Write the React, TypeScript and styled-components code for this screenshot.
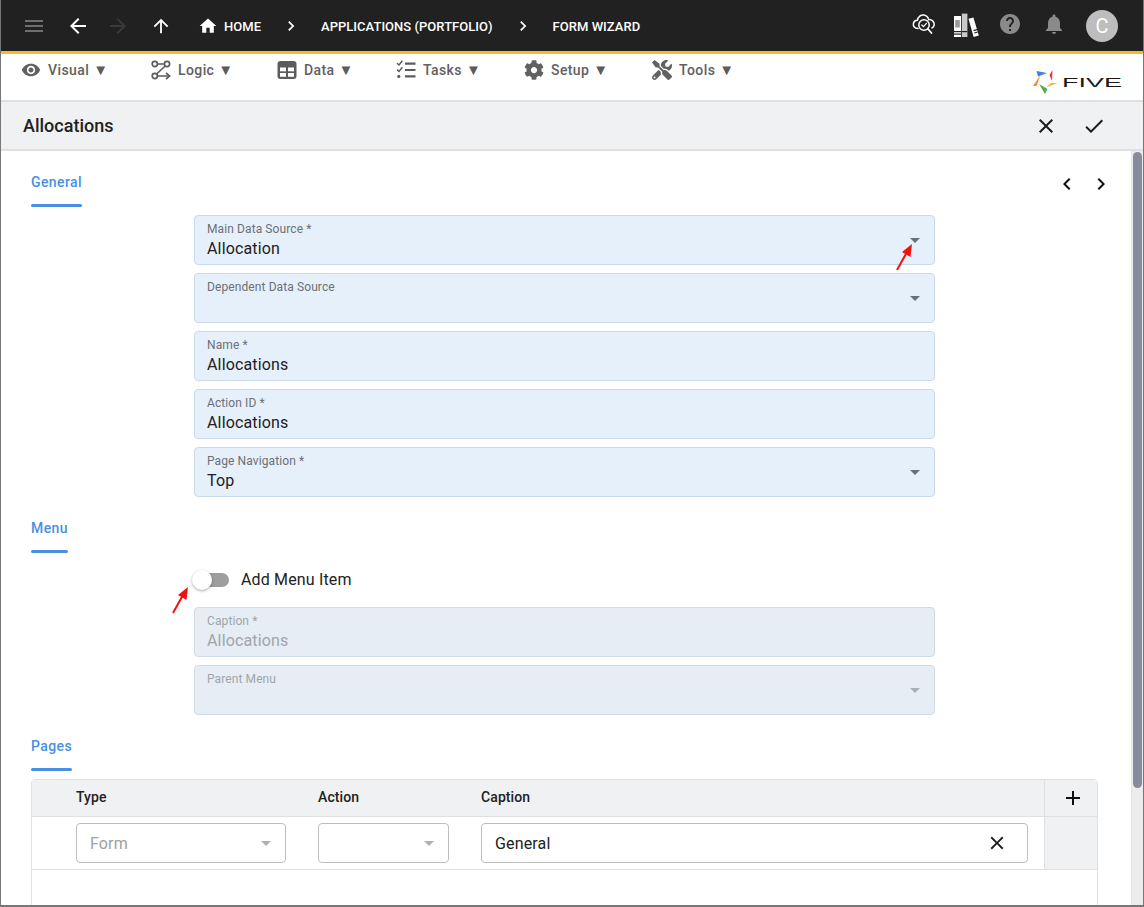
import React from "react";
import styled, { createGlobalStyle } from "styled-components";
import {
  MdMenu, MdArrowBack, MdArrowForward, MdArrowUpward, MdHome, MdChevronRight, MdChevronLeft,
  MdHelp, MdNotifications, MdClose, MdCheck, MdAdd, MdVisibility, MdArrowDropDown,
} from "react-icons/md";
import { FaCog, FaTools } from "react-icons/fa";

const Global = createGlobalStyle`
  html, body { margin: 0; padding: 0; background: #fff; }
  body { font-family: Roboto, "Liberation Sans", sans-serif; }
  * { box-sizing: border-box; }
`;

const Frame = styled.div`
  position: relative;
  width: 1144px;
  height: 907px;
  display: flex;
  flex-direction: column;
  overflow: hidden;
  border-left: 1px solid #777;
  border-right: 1px solid #777;
  border-bottom: 2px solid #777;
`;

const Header = styled.header`
  height: 54px;
  flex: none;
  background: #212121;
  border-bottom: 3px solid #f9b92d;
  display: flex;
  align-items: center;
  padding-left: 13px;
  color: #fff;
`;

const NavButton = styled.div<{ $color?: string; $ml?: number }>`
  width: 40px;
  height: 40px;
  flex: none;
  display: flex;
  align-items: center;
  justify-content: center;
  margin-left: ${(p) => p.$ml ?? 0}px;
  color: ${(p) => p.$color ?? "#fff"};
`;

const Crumb = styled.span<{ $ml?: number }>`
  display: flex;
  align-items: center;
  gap: 6px;
  margin-left: ${(p) => p.$ml ?? 0}px;
  padding-top: 1px;
  font-size: 13px;
  font-weight: 500;
  letter-spacing: 0.03px;
  white-space: nowrap;
  color: #fff;
`;

const CrumbArrow = styled.span<{ $ml: number }>`
  display: flex;
  margin-left: ${(p) => p.$ml}px;
  color: #fff;
`;

const HeaderRight = styled.div`
  margin-left: auto;
  display: flex;
  align-items: center;
  padding-right: 25px;
`;

const HeaderIcon = styled.div<{ $w: number; $color?: string; $up?: number }>`
  width: ${(p) => p.$w}px;
  display: flex;
  justify-content: center;
  margin-top: ${(p) => -(p.$up ?? 0)}px;
  color: ${(p) => p.$color ?? "#fff"};
`;

const Avatar = styled.div`
  width: 32px;
  height: 32px;
  border-radius: 50%;
  margin-left: 11px;
  background: #bdbdbd;
  color: #fff;
  font-size: 20px;
  display: flex;
  align-items: center;
  justify-content: center;
`;

const Toolbar = styled.nav`
  height: 48px;
  flex: none;
  background: #fff;
  border-bottom: 2px solid #e0e0e0;
  display: flex;
  align-items: flex-start;
  padding: 0 20px 0 20px;
`;

const ToolItem = styled.div<{ $w: number }>`
  width: ${(p) => p.$w}px;
  height: 32px;
  flex: none;
  display: flex;
  align-items: center;
  gap: 7px;
  color: #616161;
  font-size: 14px;
  font-weight: 500;
  letter-spacing: 0.4px;
  white-space: nowrap;
`;

const ToolLabel = styled.span`
  display: flex;
  align-items: center;
  gap: 4px;
`;

const ToolCaret = styled.span`
  font-size: 15px;
  line-height: 16px;
  letter-spacing: 0;
  color: #5c5c5c;
`;

const LogoWrap = styled.div`
  margin-left: auto;
  margin-top: 12px;
  display: flex;
`;

const TitleBar = styled.div`
  height: 49px;
  flex: none;
  background: #f0f1f3;
  border-bottom: 2px solid #e0e0e0;
  display: flex;
  align-items: center;
  padding: 0 37px 0 22px;
`;

const Title = styled.h1`
  margin: 0;
  flex: 1;
  font-size: 18px;
  font-weight: 500;
  color: #212121;
`;

const TitleAction = styled.div<{ $ml?: number }>`
  display: flex;
  margin-left: ${(p) => p.$ml ?? 0}px;
  color: #1c1c1c;
`;

const Body = styled.div`
  flex: 1;
  min-height: 0;
  display: flex;
`;

const Content = styled.main`
  position: relative;
  flex: 1;
  min-width: 0;
  padding-left: 30px;
  overflow: hidden;
`;

const SectionRow = styled.div`
  display: flex;
  justify-content: space-between;
`;

const SectionTab = styled.div`
  display: inline-block;
  padding-top: 23px;
  font-size: 14px;
  line-height: 16px;
  font-weight: 500;
  letter-spacing: 0.4px;
  color: #4a90e2;
  &::after {
    content: "";
    display: block;
    height: 3px;
    margin-top: 14px;
    border-radius: 2px;
    background: #4a90e2;
  }
`;

const StepArrows = styled.div`
  display: flex;
  gap: 10px;
  padding: 21px 18px 0 0;
  height: 44px;
  color: #111;
`;

const FormColumn = styled.div`
  width: 741px;
  margin: 8px 0 0 163px;
  display: flex;
  flex-direction: column;
  gap: 8px;
`;

const Field = styled.div<{ $disabled?: boolean }>`
  position: relative;
  height: 50px;
  padding: 6px 12px 0;
  border-radius: 4px;
  border: 1px solid ${(p) => (p.$disabled ? "#cfdcea" : "#c9daeb")};
  background: ${(p) => (p.$disabled ? "#e6edf5" : "#e6f0fb")};
`;

const FieldLabel = styled.div<{ $disabled?: boolean }>`
  font-size: 12px;
  line-height: 14px;
  letter-spacing: 0.1px;
  color: ${(p) => (p.$disabled ? "#a0a5ab" : "#6b7075")};
`;

const FieldValue = styled.div<{ $disabled?: boolean }>`
  font-size: 16px;
  line-height: 20px;
  margin-top: 3px;
  letter-spacing: 0.15px;
  color: ${(p) => (p.$disabled ? "#a0a5ab" : "#212121")};
`;

const Caret = styled.span<{ $color?: string; $top?: number }>`
  position: absolute;
  right: 7px;
  top: ${(p) => p.$top ?? 12}px;
  display: flex;
  color: ${(p) => p.$color ?? "#6b7075"};
`;

const SwitchRow = styled.div`
  height: 38px;
  display: flex;
  align-items: center;
  gap: 12px;
  font-size: 16px;
  letter-spacing: 0.15px;
  color: #212121;
`;

const SwitchLabel = styled.span`
  padding-bottom: 2px;
`;

const SwitchTrack = styled.div`
  position: relative;
  width: 35px;
  height: 14px;
  border-radius: 7px;
  background: #9e9e9e;
`;

const SwitchThumb = styled.span`
  position: absolute;
  left: -2px;
  top: -3px;
  width: 20px;
  height: 20px;
  border-radius: 50%;
  background: #fff;
  box-shadow: 0 1px 3px rgba(0, 0, 0, 0.35);
`;

const Table = styled.div`
  width: 1067px;
  margin-top: 8px;
  border: 1px solid #e0e0e0;
  border-radius: 4px 4px 0 0;
  height: 200px;
`;

const TableRow = styled.div<{ $h: number; $head?: boolean }>`
  display: grid;
  grid-template-columns: 44px 242px 163px 563px 1fr;
  height: ${(p) => p.$h}px;
  border-bottom: 1px solid #e0e0e0;
  background: ${(p) => (p.$head ? "#f0f1f3" : "#fff")};
`;

const HeadCell = styled.div`
  display: flex;
  align-items: center;
  padding-bottom: 2px;
  font-size: 14px;
  font-weight: 500;
  letter-spacing: 0.1px;
  color: #212121;
`;

const Cell = styled.div`
  display: flex;
  align-items: center;
`;

const EndCell = styled.div<{ $shade?: boolean }>`
  display: flex;
  align-items: center;
  justify-content: center;
  padding-left: 3px;
  border-left: 1px solid #e0e0e0;
  background: ${(p) => (p.$shade ? "#f0f1f3" : "transparent")};
  color: #111;
`;

const RowInput = styled.div<{ $w: number; $color?: string }>`
  position: relative;
  width: ${(p) => p.$w}px;
  height: 40px;
  padding: 0 13px;
  display: flex;
  align-items: center;
  justify-content: space-between;
  border: 1px solid #bdbdbd;
  border-radius: 4px;
  font-size: 16px;
  letter-spacing: 0.15px;
  color: ${(p) => p.$color ?? "#212121"};
`;

const RowClear = styled.span`
  display: flex;
  margin-right: 6px;
  color: #1c1c1c;
`;

const ScrollTrack = styled.div`
  width: 12px;
  flex: none;
  background: #ececec;
  border-left: 1px solid #e4e4e4;
  padding: 1px 1px 0 1px;
`;

const ScrollThumb = styled.div`
  width: 9px;
  height: 636px;
  border-radius: 5px;
  background: #868c9c;
`;

const Arrow = styled.svg<{ $left: number; $top: number }>`
  position: absolute;
  left: ${(p) => p.$left}px;
  top: ${(p) => p.$top}px;
  width: 20px;
  height: 30px;
  pointer-events: none;
`;

const RedArrow = ({ left, top }: { left: number; top: number }) => (
  <Arrow $left={left} $top={top} viewBox="0 0 20 30">
    <path d="M2 28 L12 10" stroke="#f01010" strokeWidth="2" fill="none" />
    <path d="M17 2 L15.5 15 L7 10 Z" fill="#f01010" />
  </Arrow>
);

const CloudIcon = () => (
  <svg width="24" height="24" viewBox="0 0 24 24" fill="none" stroke="#fff" strokeWidth="1.5" strokeLinecap="round">
    <path d="M6 16.5 C2.5 16.5 1 14 1.4 11.6 C1.8 9.4 3.6 8.2 5.4 8.3 C6 4.6 9 2.4 12 3 C14.6 3.5 16.2 5.6 16.7 7.6 C19.8 7.4 22.4 9.6 22.2 12.6 C22.1 14.2 21.2 15.4 20 16" />
    <circle cx="12" cy="13" r="5.2" />
    <path d="M9.8 13 L11.5 14.7 L14.4 11.4" strokeWidth="1.2" />
    <path d="M16 17 L19.5 21" strokeWidth="1.8" />
  </svg>
);

const BooksIcon = () => (
  <svg width="26" height="25" viewBox="0 0 26 25" fill="#fff">
    <path d="M1 3 H8 V24 H1 Z" />
    <rect x="2.2" y="7" width="4.6" height="7.5" fill="#9a9a9a" />
    <rect x="1" y="18" width="7" height="1.2" fill="#212121" />
    <rect x="1" y="20.5" width="7" height="1.2" fill="#212121" />
    <rect x="8.8" y="0.6" width="5.6" height="23.4" fill="#c9c9c9" />
    <rect x="8.8" y="18" width="5.6" height="1.2" fill="#212121" />
    <path d="M15.5 5.8 L20.4 4.4 L25.8 22.4 L20.6 24 Z" />
    <path d="M20.6 17.6 L24 16.6 M21.3 20 L24.7 19" stroke="#212121" strokeWidth="1.1" />
  </svg>
);

const LogicIcon = () => (
  <svg width="20" height="20" viewBox="0 0 20 20" fill="none" stroke="#5c5c5c" strokeWidth="1.7">
    <circle cx="3.8" cy="4" r="2.6" />
    <circle cx="16" cy="4" r="2.6" />
    <circle cx="3.8" cy="16" r="2.6" />
    <path d="M6.4 4 H13.4 M14.2 6 L5.6 14 M6.4 16 H18" />
    <path d="M15 12.8 L18.6 16 L15 19.2" />
  </svg>
);

const TasksIcon = () => (
  <svg width="20" height="20" viewBox="0 0 20 20" fill="none" stroke="#5c5c5c">
    <path d="M9 3.6 H19.5 M9 10 H19.5 M9 16.4 H19.5" strokeWidth="2.1" />
    <path d="M1 3.2 L3 5 L6.4 0.8" strokeWidth="1.5" />
    <path d="M1 9.6 L3 11.4 L6.4 7.2" strokeWidth="1.5" />
    <circle cx="2.8" cy="16.4" r="1.6" fill="#5c5c5c" stroke="none" />
  </svg>
);

const DataIcon = () => (
  <svg width="20" height="20" viewBox="0 0 20 20">
    <rect x="0.5" y="1" width="19" height="18" rx="3" fill="#5c5c5c" />
    <rect x="3" y="7.5" width="6" height="3.8" fill="#fff" />
    <rect x="11" y="7.5" width="6" height="3.8" fill="#fff" />
    <rect x="3" y="13" width="6" height="3.8" fill="#fff" />
    <rect x="11" y="13" width="6" height="3.8" fill="#fff" />
  </svg>
);

const FiveLogo = () => (
  <svg width="92" height="32" viewBox="1032 66 92 32">
    <polygon points="1037.5,71 1048,73 1039,76.5" fill="#3f83dc" />
    <polygon points="1053.5,70 1050.5,75 1053,81" fill="#e23b3b" />
    <polygon points="1058.5,83 1047,87.5 1052,83" fill="#f7b52c" />
    <polygon points="1040,84 1048.5,89 1046,94" fill="#4caf50" />
    <polygon points="1034,86 1041.5,75 1037.5,86" fill="#f58a2c" />
    <text x="1063" y="87" fontFamily="'Liberation Sans', sans-serif" fontSize="12.5" textLength="60" lengthAdjust="spacingAndGlyphs" fill="#1a1a1a">
      FIVE
    </text>
  </svg>
);

type FieldProps = { label: string; value?: string; select?: boolean; disabled?: boolean };

const FormField = ({ label, value, select, disabled }: FieldProps) => (
  <Field $disabled={disabled}>
    <FieldLabel $disabled={disabled}>{label}</FieldLabel>
    <FieldValue $disabled={disabled}>{value ?? "\u00a0"}</FieldValue>
    {select && (
      <Caret $color={disabled ? "#a9afb6" : undefined}>
        <MdArrowDropDown size={24} />
      </Caret>
    )}
  </Field>
);

const tools = [
  { label: "Visual", w: 130, icon: <MdVisibility size={20} /> },
  { label: "Logic", w: 126, icon: <LogicIcon /> },
  { label: "Data", w: 119, icon: <DataIcon /> },
  { label: "Tasks", w: 128, icon: <TasksIcon /> },
  { label: "Setup", w: 128, icon: <FaCog size={20} /> },
  { label: "Tools", w: 100, icon: <FaTools size={20} /> },
];

export default function App() {
  return (
    <Frame>
      <Global />
      <Header>
        <NavButton $color="#6e6e6e"><MdMenu size={24} /></NavButton>
        <NavButton $ml={4}><MdArrowBack size={24} /></NavButton>
        <NavButton $color="#3a3a3a"><MdArrowForward size={24} /></NavButton>
        <NavButton $ml={3}><MdArrowUpward size={22} /></NavButton>
        <Crumb $ml={17}><MdHome size={20} />HOME</Crumb>
        <CrumbArrow $ml={20}><MdChevronRight size={20} /></CrumbArrow>
        <Crumb $ml={20}>APPLICATIONS (PORTFOLIO)</Crumb>
        <CrumbArrow $ml={20}><MdChevronRight size={20} /></CrumbArrow>
        <Crumb $ml={20}>FORM WIZARD</Crumb>
        <HeaderRight>
          <HeaderIcon $w={42} $up={4}><CloudIcon /></HeaderIcon>
          <HeaderIcon $w={42}><BooksIcon /></HeaderIcon>
          <HeaderIcon $w={46} $color="#8a8a8a" $up={4}><MdHelp size={24} /></HeaderIcon>
          <HeaderIcon $w={42} $color="#8a8a8a" $up={4}><MdNotifications size={24} /></HeaderIcon>
          <Avatar>C</Avatar>
        </HeaderRight>
      </Header>
      <Toolbar>
        {tools.map((t) => (
          <ToolItem key={t.label} $w={t.w}>
            {t.icon}
            <ToolLabel>{t.label}<ToolCaret>▼</ToolCaret></ToolLabel>
          </ToolItem>
        ))}
        <LogoWrap><FiveLogo /></LogoWrap>
      </Toolbar>
      <TitleBar>
        <Title>Allocations</Title>
        <TitleAction><MdClose size={24} /></TitleAction>
        <TitleAction $ml={24}><MdCheck size={24} /></TitleAction>
      </TitleBar>
      <Body>
        <Content>
          <SectionRow>
            <SectionTab>General</SectionTab>
            <StepArrows>
              <MdChevronLeft size={24} />
              <MdChevronRight size={24} />
            </StepArrows>
          </SectionRow>
          <FormColumn>
            <FormField label="Main Data Source *" value="Allocation" select />
            <FormField label="Dependent Data Source" select />
            <FormField label="Name *" value="Allocations" />
            <FormField label="Action ID *" value="Allocations" />
            <FormField label="Page Navigation *" value="Top" select />
          </FormColumn>
          <SectionRow>
            <SectionTab>Menu</SectionTab>
          </SectionRow>
          <FormColumn>
            <SwitchRow>
              <SwitchTrack><SwitchThumb /></SwitchTrack>
              <SwitchLabel>Add Menu Item</SwitchLabel>
            </SwitchRow>
            <FormField label="Caption *" value="Allocations" disabled />
            <FormField label="Parent Menu" select disabled />
          </FormColumn>
          <SectionRow>
            <SectionTab>Pages</SectionTab>
          </SectionRow>
          <Table>
            <TableRow $h={37} $head>
              <div />
              <HeadCell>Type</HeadCell>
              <HeadCell>Action</HeadCell>
              <HeadCell>Caption</HeadCell>
              <EndCell><MdAdd size={24} /></EndCell>
            </TableRow>
            <TableRow $h={53}>
              <div />
              <Cell>
                <RowInput $w={210} $color="#a0a0a0">Form<Caret $color="#b0b0b0" $top={7}><MdArrowDropDown size={24} /></Caret></RowInput>
              </Cell>
              <Cell>
                <RowInput $w={131}><Caret $color="#b0b0b0" $top={7}><MdArrowDropDown size={24} /></Caret></RowInput>
              </Cell>
              <Cell>
                <RowInput $w={547}>General<RowClear><MdClose size={22} /></RowClear></RowInput>
              </Cell>
              <EndCell $shade />
            </TableRow>
          </Table>
          <RedArrow left={894} top={91} />
          <RedArrow left={170} top={434} />
        </Content>
        <ScrollTrack><ScrollThumb /></ScrollTrack>
      </Body>
    </Frame>
  );
}
